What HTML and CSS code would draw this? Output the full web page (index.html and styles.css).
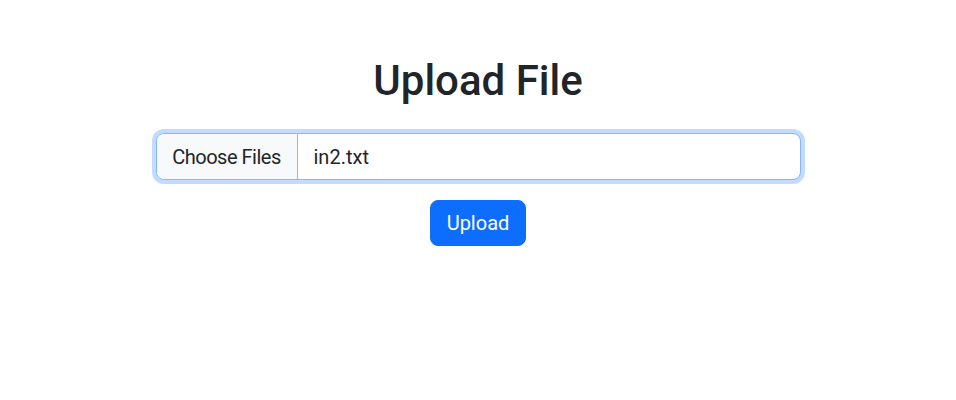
FILE: index.html
```html
<!DOCTYPE html>
<html lang="en">
<head>
<meta charset="utf-8">
<title>Upload File</title>
<link rel="stylesheet" href="styles.css">
</head>
<body>
<main class="page">
  <h1 class="title">Upload File</h1>
  <form class="upload-form">
    <div class="file-input">
      <span class="file-button">Choose Files</span>
      <span class="file-name">in2.txt</span>
    </div>
    <button type="button" class="btn-upload">Upload</button>
  </form>
</main>
</body>
</html>
```
FILE: styles.css
```css
* { box-sizing: border-box; }
html, body { margin: 0; padding: 0; background: #fff; }
body {
  font-family: Roboto, "Liberation Sans", sans-serif;
  color: #212529;
}
.page {
  display: flex;
  flex-direction: column;
  align-items: center;
  padding-top: 56px;
}
.title {
  margin: 0 0 27px;
  font-size: 42px;
  line-height: 50px;
  font-weight: 500;
  color: #212529;
}
.upload-form {
  display: flex;
  flex-direction: column;
  align-items: center;
  gap: 20px;
}
.file-input {
  width: 645px;
  height: 47px;
  display: flex;
  align-items: stretch;
  border: 1px solid #86b7fe;
  border-radius: 8px;
  box-shadow: 0 0 0 4px rgba(13, 110, 253, 0.25);
  overflow: hidden;
  font-size: 20px;
  background: #fff;
}
.file-button {
  width: 141px;
  display: flex;
  align-items: center;
  justify-content: center;
  background: #f8f9fa;
  border-right: 1px solid #86b7fe;
  color: #212529;
  letter-spacing: -0.5px;
  white-space: nowrap;
}
.file-name {
  display: flex;
  align-items: center;
  padding: 0 16px;
  color: #212529;
}
.btn-upload {
  height: 46px;
  padding: 0 16px;
  border: 1px solid #0d6efd;
  border-radius: 8px;
  background: #0d6efd;
  color: #fff;
  font-family: inherit;
  font-size: 20px;
  line-height: 1;
}
```
